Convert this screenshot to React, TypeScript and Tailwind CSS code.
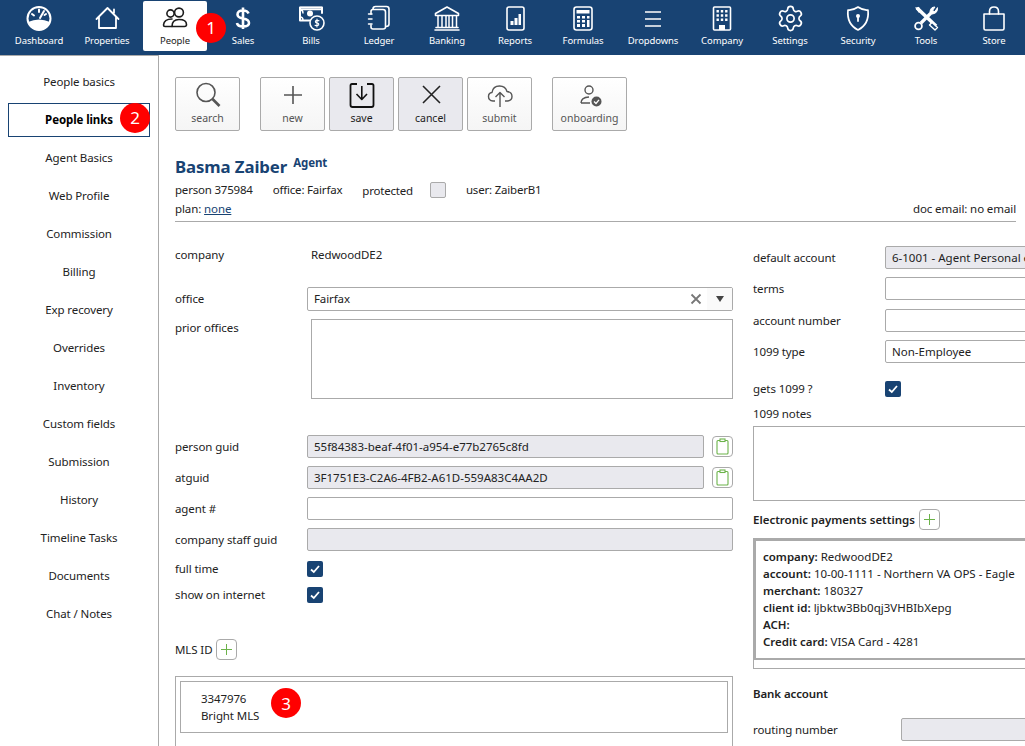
import type { ReactNode } from 'react';
import { Settings } from 'lucide-react';

const fontClass = "font-['Noto_Sans','Liberation_Sans',sans-serif]";

const Ico = ({ children, color = 'white' }: { children: ReactNode; color?: string }) => (
    <svg width="32" height="32" viewBox="0 0 32 32" fill="none" stroke={color} strokeWidth="1.6" strokeLinecap="round" strokeLinejoin="round">
        {children}
    </svg>
);

const navItems: { label: string; icon: ReactNode; active?: boolean; cell?: string }[] = [
    {
        label: 'Dashboard',
        icon: (
            <Ico>
                <circle cx="16" cy="16.5" r="11.5" strokeWidth="2" />
                <path d="M5 20 Q16 15 27 20 Q24 28 16 28 Q8 28 5 20Z" fill="white" stroke="none" />
                <path d="M17 16 L21 9 M9 12 l2 1.5 M16 7.5 v2.5 M23 12 l-1.5 1" strokeWidth="2" />
            </Ico>
        ),
    },
    {
        label: 'Properties',
        icon: (
            <Ico>
                <path d="M5.5 17 L16.5 6 L27.5 17 M8 15 V26 H25 V15 M23 11 V7.5" strokeWidth="1.8" />
            </Ico>
        ),
    },
    {
        label: 'People',
        active: true,
        icon: (
            <Ico color="#1c1c1c">
                <circle cx="11.5" cy="11.5" r="3.6" />
                <circle cx="20" cy="10.5" r="4.4" />
                <path d="M13 24.5 Q13 17.5 20 17.5 Q27.5 17.5 27.5 22.5 Q27.5 24.5 25.5 24.5Z" />
                <path d="M13 17 Q5 17 4.5 23 Q4.5 24.5 6 24.5 H13" />
            </Ico>
        ),
    },
    {
        label: 'Sales',
        icon: (
            <Ico>
                <path d="M21.5 11.5 Q20.5 8.5 16 8.5 Q10.5 8.5 10.5 12.5 Q10.5 15.5 16 16.5 Q22 17.5 22 21 Q22 24.5 16 24.5 Q10.5 24.5 10 21 M16 5.5 V27" strokeWidth="2.6" strokeLinecap="butt" />
            </Ico>
        ),
    },
    {
        label: 'Bills',
        icon: (
            <Ico>
                <path d="M15 18.5 H5 V5.5 H27 V11" strokeWidth="2" />
                <path d="M5 5.5 H27 V7.5 H5Z M5 7.5 Q8 8 8 11 M5 15 Q8 15 8 18" strokeWidth="1.4" />
                <circle cx="15" cy="11.5" r="3" fill="white" stroke="none" />
                <circle cx="22" cy="21" r="7" />
                <path d="M24 18.8 Q22 17.8 20.5 19 Q20 20.7 22 21 Q24.2 21.4 23.6 23 Q22 24.2 20 23.2 M22 17 V25" strokeWidth="1.1" />
            </Ico>
        ),
    },
    {
        label: 'Ledger',
        icon: (
            <Ico>
                <path d="M8 12 V9.5 Q8 7.5 10 7.5 H20 Q22.5 7.5 22.5 10 V25 Q22.5 27 20 27 H10 Q8 27 8 25 V23" />
                <path d="M10 7 Q10 4.5 12.5 4.5 H23.5 Q26 4.5 26 7 V22 Q26 24.5 23 24.5" />
                <path d="M5.5 12 H9 M5.5 17 H9 M5.5 22 H9" strokeWidth="1.5" />
            </Ico>
        ),
    },
    {
        label: 'Banking',
        icon: (
            <Ico>
                <path d="M4.5 11.5 L16 5 L27.5 11.5 V13.5 H4.5Z" strokeWidth="1.6" />
                <path d="M7 14 V25 M11 14 V25 M15 14 V25 M18 14 V25 M21.5 14 V25 M25.5 14 V25" strokeWidth="1.5" />
                <path d="M5 25.5 H27 M4 28 H28" strokeWidth="1.6" />
            </Ico>
        ),
    },
    {
        label: 'Reports',
        icon: (
            <Ico>
                <rect x="8" y="5" width="17" height="23" rx="2" />
                <path d="M11.5 19 h3 v4 h-3Z M15.5 16 h3 v7 h-3Z" fill="white" stroke="none" />
                <path d="M19.5 12 h2.5 v11 h-2.5Z" fill="white" stroke="none" />
            </Ico>
        ),
    },
    {
        label: 'Formulas',
        icon: (
            <Ico>
                <rect x="7" y="5" width="18" height="23" rx="2.5" />
                <path d="M9.5 8 h13 v3.5 h-13Z" fill="white" stroke="none" />
                <path d="M10 14 h3 v2.5 h-3Z M15 14 h3 v2.5 h-3Z M20 14 h2.5 v2.5 h-2.5Z M10 18 h3 v2.5 h-3Z M15 18 h3 v2.5 h-3Z M10 22 h3 v3 h-3Z M15 22 h3 v3 h-3Z M20 18 h2.5 v7 h-2.5Z" fill="white" stroke="none" />
            </Ico>
        ),
    },
    {
        label: 'Dropdowns',
        cell: 'ml-[2px]',
        icon: (
            <Ico color="#c6cfda">
                <path d="M8 10 H24 M8 17 H24 M8 24 H24" strokeWidth="1.8" strokeLinecap="butt" />
            </Ico>
        ),
    },
    {
        label: 'Company',
        cell: 'ml-[1px]',
        icon: (
            <Ico>
                <rect x="7.5" y="5" width="17" height="23" rx="1" />
                <path d="M10.5 8 h2.4 v2.4 h-2.4Z M14.8 8 h2.4 v2.4 h-2.4Z M19.1 8 h2.4 v2.4 h-2.4Z M10.5 12.3 h2.4 v2.4 h-2.4Z M14.8 12.3 h2.4 v2.4 h-2.4Z M19.1 12.3 h2.4 v2.4 h-2.4Z M10.5 16.6 h2.4 v2.4 h-2.4Z M14.8 16.6 h2.4 v2.4 h-2.4Z M19.1 16.6 h2.4 v2.4 h-2.4Z M13 23 h6 v5 h-6Z" fill="white" stroke="none" />
            </Ico>
        ),
    },
    {
        label: 'Settings',
        icon: <Settings size={29} strokeWidth={1.4} color="white" />,
    },
    {
        label: 'Security',
        icon: (
            <Ico>
                <path d="M16 5 Q21 8.5 26 8 Q27.5 22 16 28 Q4.5 22 6 8 Q11 8.5 16 5Z" strokeWidth="1.7" />
                <circle cx="16" cy="14" r="2" fill="white" stroke="none" />
                <path d="M16 14 V19" strokeWidth="1.8" />
            </Ico>
        ),
    },
    {
        label: 'Tools',
        icon: (
            <Ico>
                <path d="M7 6 L26 24" strokeWidth="3.6" strokeLinecap="butt" />
                <path d="M5 5.5 L9 5 L11 9 L9 11Z" fill="white" stroke="none" />
                <path d="M22 20.5 L27.5 25.5 L25 28 L19.5 23Z" fill="#184373" stroke="white" strokeWidth="1.4" />
                <path d="M11 21 L22 10" strokeWidth="3.2" strokeLinecap="butt" />
                <path d="M27.5 6 Q28 11.5 22 12 L20 9.5 Q20.5 5 25 5 L22.5 8.5 L24.5 9.5Z" fill="white" stroke="white" strokeWidth="1" />
                <circle cx="8.5" cy="24" r="3.4" strokeWidth="1.8" />
            </Ico>
        ),
    },
    {
        label: 'Store',
        icon: (
            <Ico>
                <path d="M6 12 H26 V26.5 Q26 28 24.5 28 H7.5 Q6 28 6 26.5Z" strokeWidth="1.6" />
                <path d="M11.5 12 V9.5 Q11.5 5 16 5 Q20.5 5 20.5 9.5 V12" strokeWidth="1.6" />
            </Ico>
        ),
    },
];

const sideItems = [
    'People basics', 'People links', 'Agent Basics', 'Web Profile', 'Commission', 'Billing', 'Exp recovery', 'Overrides',
    'Inventory', 'Custom fields', 'Submission', 'History', 'Timeline Tasks', 'Documents', 'Chat / Notes',
];

const RedDot = ({ n, className }: { n: number; className: string }) => (
    <span className={`absolute flex h-[30px] w-[30px] items-center justify-center rounded-full bg-[#ff0000] text-[17px] font-normal text-white ${className}`}>
        {n}
    </span>
);

const TopNav = () => (
    <nav className="flex h-[55px] shrink-0 bg-[#184373] pl-[5px]">
        {navItems.map((item) => (
            <div key={item.label} className={`flex w-[68px] shrink-0 justify-center ${item.cell ?? ''}`}>
                <div className={`mt-px flex h-[50px] w-[64px] flex-col items-center rounded-[2px] pt-px ${item.active ? 'bg-white text-[#1c1c1c]' : 'text-white'}`}>
                    <div className="flex h-[32px] items-center justify-center">{item.icon}</div>
                    <span className="whitespace-nowrap text-[9.5px] leading-[14px] tracking-[-0.1px]">{item.label}</span>
                </div>
            </div>
        ))}
    </nav>
);

const SideBar = () => (
    <aside className="flex w-[159px] shrink-0 flex-col border-r border-t border-[#aaaaaa] pt-[7px] text-[11.5px] tracking-[-0.1px] text-[#222]">
        {sideItems.map((label) => {
            const active = label === 'People links';
            return (
                <div key={label} className="flex h-[38px] shrink-0 items-center justify-center">
                    <div className={`flex h-[34px] w-[142px] items-center justify-center ${active ? 'border border-[#184373] font-bold text-black' : ''}`}>
                        {label}
                    </div>
                </div>
            );
        })}
    </aside>
);

const ToolButton = ({ label, icon, pressed, wide, className = '' }: { label: string; icon: ReactNode; pressed?: boolean; wide?: boolean; className?: string }) => (
    <div className={`flex h-[54px] shrink-0 flex-col items-center rounded-[2px] border border-[#aaaaaa] ${wide ? 'w-[75px]' : 'w-[65px]'} ${pressed ? 'bg-[#e9e9ee] text-[#1c1c1c]' : 'bg-gradient-to-b from-white to-[#f5f5f5] text-[#555]'} ${className}`}>
        <div className="flex h-[34px] w-full items-center justify-center">{icon}</div>
        <span className="mt-[-2px] text-[10.5px] leading-[16px]">{label}</span>
    </div>
);

const Toolbar = () => (
    <div className="flex">
        <ToolButton
            label="search"
            icon={<svg width="30" height="30" viewBox="0 0 30 30" fill="none" stroke="#555" strokeWidth="1.6"><circle cx="13" cy="12.5" r="9" /><path d="M19.5 19 L26.5 26" strokeWidth="2.6" /></svg>}
        />
        <ToolButton
            className="ml-[20px]"
            label="new"
            icon={<svg width="30" height="30" viewBox="0 0 30 30" fill="none" stroke="#555" strokeWidth="1.6"><path d="M15 6 V24 M6 15 H24" /></svg>}
        />
        <ToolButton
            className="ml-[4px]"
            pressed
            label="save"
            icon={<svg width="30" height="30" viewBox="0 0 30 30" fill="none" stroke="#111" strokeWidth="1.8" strokeLinejoin="round"><path d="M10 4 H5 Q3.5 4 3.5 5.5 V25 Q3.5 27 5.5 27 H24.5 Q26.5 27 26.5 25 V5.5 Q26.5 4 25 4 H20" /><path d="M14.8 6 V19 M9.5 14 L14.8 19.5 L20 14" strokeWidth="1.6" /></svg>}
        />
        <ToolButton
            className="ml-[4px]"
            pressed
            label="cancel"
            icon={<svg width="30" height="30" viewBox="0 0 30 30" fill="none" stroke="#222" strokeWidth="1.6"><path d="M7 6 L24 23 M24 6 L7 23" /></svg>}
        />
        <ToolButton
            className="ml-[4px]"
            label="submit"
            icon={<svg width="30" height="30" viewBox="0 0 30 30" fill="none" stroke="#555" strokeWidth="1.4" strokeLinejoin="round"><path d="M10 21 H8 Q3.5 20.5 3.5 16.5 Q3.5 13 7 12.5 Q8 6 14.5 6 Q20.5 6 22 11.5 Q27 12 27 16.5 Q27 20.5 22.5 21 H20" /><path d="M15 27 V13 M10.5 17 L15 12.5 L19.5 17" /></svg>}
        />
        <ToolButton
            className="ml-[20px]"
            wide
            label="onboarding"
            icon={<svg width="30" height="30" viewBox="0 0 30 30" fill="none" stroke="#555" strokeWidth="1.4"><circle cx="14" cy="10" r="4" /><path d="M6 23 Q6 17.5 14 17 M6 23 H15" /><circle cx="21.5" cy="21.5" r="5" fill="#555" stroke="none" /><path d="M19 21.5 L21 23.5 L24 19.8" stroke="white" strokeWidth="1.3" /></svg>}
        />
    </div>
);

const Input = ({ value = '', gray, className = '' }: { value?: string; gray?: boolean; className?: string }) => (
    <div className={`flex h-[23px] items-center overflow-hidden whitespace-nowrap rounded-[2px] border border-[#aaaaaa] pl-[6px] tracking-normal ${gray ? 'bg-[#e9e9ee]' : 'bg-white'} ${className}`}>
        {value}
    </div>
);

const Check = () => (
    <div className="flex h-4 w-4 shrink-0 items-center justify-center rounded-[2px] bg-[#184373]">
        <svg width="12" height="12" viewBox="0 0 12 12" fill="none" stroke="white" strokeWidth="1.8"><path d="M2 6.5 L4.8 9 L10 3" /></svg>
    </div>
);

const PlusButton = () => (
    <div className="ml-[4px] flex h-[21px] w-[21px] items-center justify-center rounded-[4px] border border-[#aaaaaa] bg-white">
        <svg width="13" height="13" viewBox="0 0 13 13" fill="none" stroke="#6cb34a" strokeWidth="1"><path d="M6.5 1 V12 M1 6.5 H12" /></svg>
    </div>
);

const ClipButton = () => (
    <div className="ml-[8px] flex h-[21px] w-[21px] items-center justify-center rounded-[4px] border border-[#aaaaaa] bg-white">
        <svg width="15" height="17" viewBox="0 0 15 17" fill="none" stroke="#6cb34a" strokeWidth="1.1"><rect x="2" y="2.5" width="11" height="13.5" rx="1" /><rect x="5" y="1" width="5" height="2.5" fill="white" /></svg>
    </div>
);

const Row = ({ label, children, className = '' }: { label: string; children: ReactNode; className?: string }) => (
    <div className={`flex items-center ${className}`}>
        <div className="w-[132px] shrink-0">{label}</div>
        {children}
    </div>
);

const LeftColumn = () => (
    <div className="w-[558px] shrink-0 text-[11.5px] leading-[16px] tracking-[-0.1px] text-[#222]">
        <Row label="company" className="h-[20px]">
            <span className="ml-[4px]">RedwoodDE2</span>
        </Row>
        <Row label="office" className="mt-[22px]">
            <div className="flex h-[24px] flex-1 items-center rounded-[2px] border border-[#aaaaaa] bg-white pl-[6px]">
                <span className="flex-1">Fairfax</span>
                <svg width="12" height="12" viewBox="0 0 12 12" fill="none" stroke="#777" strokeWidth="1.8"><path d="M1.5 1.5 L10.5 10.5 M10.5 1.5 L1.5 10.5" /></svg>
                <div className="ml-[5px] flex h-full w-[25px] items-center justify-center bg-[#fafafa]">
                    <div className="h-0 w-0 border-x-[4px] border-t-[6px] border-x-transparent border-t-[#444]" />
                </div>
            </div>
        </Row>
        <div className="mt-[8px] flex">
            <div className="w-[136px] shrink-0 pt-[1px]">prior offices</div>
            <div className="h-[80px] flex-1 border border-[#aaaaaa]" />
        </div>
        <Row label="person guid" className="mt-[36px]">
            <Input gray value="55f84383-beaf-4f01-a954-e77b2765c8fd" className="flex-1" />
            <ClipButton />
        </Row>
        <Row label="atguid" className="mt-[8px]">
            <Input gray value="3F1751E3-C2A6-4FB2-A61D-559A83C4AA2D" className="flex-1" />
            <ClipButton />
        </Row>
        <Row label="agent #" className="mt-[8px]">
            <Input className="flex-1" />
        </Row>
        <Row label="company staff guid" className="mt-[8px]">
            <Input gray className="flex-1" />
        </Row>
        <Row label="full time" className="mt-[10px]">
            <Check />
        </Row>
        <Row label="show on internet" className="mt-[10px]">
            <Check />
        </Row>
        <div className="mt-[36px] flex items-center">
            <span>MLS ID</span>
            <PlusButton />
        </div>
        <div className="mt-[16px] h-[80px] border border-[#aaaaaa] p-[4px]">
            <div className="relative h-[52px] border border-[#aaaaaa] pl-[20px] pt-[8px] leading-[17px]">
                <div>3347976</div>
                <div>Bright MLS</div>
                <RedDot n={3} className="left-[90px] top-[6px]" />
            </div>
        </div>
    </div>
);

const RightColumn = () => (
    <div className="ml-[20px] w-[300px] shrink-0 text-[11.5px] leading-[16px] tracking-[-0.1px] text-[#222]">
        <Row label="default account" className="mt-[1px]">
            <Input gray value="6-1001 - Agent Personal expense" className="flex-1" />
        </Row>
        <Row label="terms" className="mt-[8px]">
            <Input className="flex-1" />
        </Row>
        <Row label="account number" className="mt-[9px]">
            <Input className="flex-1" />
        </Row>
        <Row label="1099 type" className="mt-[8px]">
            <Input value="Non-Employee" className="flex-1" />
        </Row>
        <Row label="gets 1099 ?" className="mt-[18px]">
            <Check />
        </Row>
        <div className="mt-[9px]">1099 notes</div>
        <div className="mt-[4px] h-[75px] border border-[#aaaaaa]" />
        <div className="mt-[8px] flex items-center font-semibold tracking-normal">
            <span>Electronic payments settings</span>
            <PlusButton />
        </div>
        <div className="mt-[8px] h-[131px] border border-[#aaaaaa]">
            <div className="h-[121px] border-2 border-[#aaaaaa] pl-[7px] pt-[7px] leading-[17px] tracking-normal">
                <div><b className="font-semibold">company:</b> RedwoodDE2</div>
                <div><b className="font-semibold">account:</b> 10-00-1111 - Northern VA OPS - Eagle</div>
                <div><b className="font-semibold">merchant:</b> 180327</div>
                <div><b className="font-semibold">client id:</b> ljbktw3Bb0qj3VHBIbXepg</div>
                <div><b className="font-semibold">ACH:</b></div>
                <div><b className="font-semibold">Credit card:</b> VISA Card - 4281</div>
            </div>
        </div>
        <div className="mt-[17px] font-semibold">Bank account</div>
        <div className="mt-[16px] flex items-center">
            <div className="w-[148px] shrink-0">routing number</div>
            <Input gray className="flex-1" />
        </div>
    </div>
);

const Header = () => (
    <div className="h-[91px] border-b border-[#aaaaaa] pt-[24px] text-[11.5px] tracking-[-0.1px] text-[#222]">
        <div className="flex items-start leading-[24px]">
            <span className="text-[16.8px] font-bold text-[#184373]">Basma Zaiber</span>
            <span className="ml-[6px] text-[11.5px] font-bold leading-[16px] text-[#184373]">Agent</span>
        </div>
        <div className="flex h-[22px] items-center tracking-[-0.2px]">
            <span>person 375984</span>
            <span className="ml-[20px]">office: Fairfax</span>
            <span className="ml-[20px] pt-[2px]">protected</span>
            <span className="ml-[17px] h-4 w-4 rounded-[2px] border border-[#aaaaaa] bg-[#e9e9ee]" />
            <span className="ml-[20px]">user: ZaiberB1</span>
        </div>
        <div className="flex items-center justify-between leading-[16px]">
            <span>plan: <span className="text-[#184373] underline">none</span></span>
            <span>doc email: no email</span>
        </div>
    </div>
);

export default function App() {
    return (
        <div className={`flex h-[746px] w-[1025px] flex-col overflow-hidden bg-white ${fontClass}`}>
            <div className="relative shrink-0">
                <TopNav />
                <RedDot n={1} className="left-[196px] top-[13px]" />
            </div>
            <div className="flex min-h-0 flex-1">
                <div className="relative flex">
                    <SideBar />
                    <RedDot n={2} className="left-[120px] top-[48px]" />
                </div>
                <main className="min-w-0 flex-1 overflow-hidden pl-[16px] pr-[9px] pt-[22px]">
                    <Toolbar />
                    <Header />
                    <div className="mt-[23px] flex">
                        <LeftColumn />
                        <RightColumn />
                    </div>
                </main>
            </div>
        </div>
    );
}
